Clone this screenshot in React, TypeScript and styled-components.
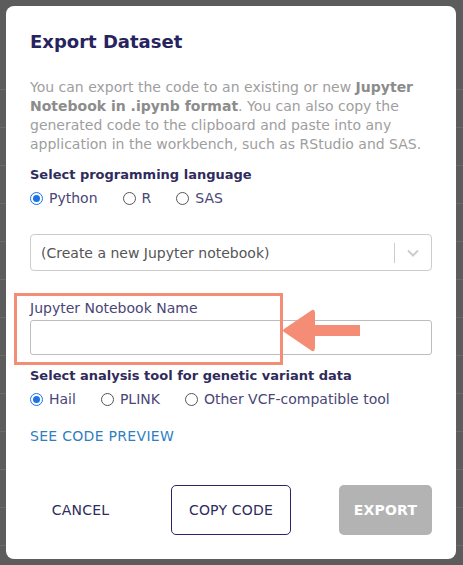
import React from 'react';
import styled, { createGlobalStyle } from 'styled-components';

const GlobalStyle = createGlobalStyle`
  html, body {
    margin: 0;
    padding: 0;
    background: #5c5c5c;
    font-family: "DejaVu Sans", "Open Sans", sans-serif;
  }
  * { box-sizing: border-box; }
`;

const Page = styled.div`
  position: relative;
  width: 463px;
  height: 565px;
  overflow: hidden;
  background: #5c5c5c;
`;

const Backdrop = styled.div`
  display: flex;
  flex-direction: column;
  padding-top: 52px;
`;

const BackRow = styled.div`
  height: 38px;
  border-bottom: 1px solid #6a6a6a;
`;

const Overlay = styled.div`
  position: absolute;
  inset: 0;
  padding: 6px 7px 6px 6px;
`;

const Modal = styled.div`
  position: relative;
  height: 553px;
  background: #fff;
  border-radius: 8px;
  padding: 24px;
  display: flex;
  flex-direction: column;
`;

const Title = styled.h2`
  margin: 0;
  font-size: 18px;
  font-weight: 600;
  color: #27235e;
  line-height: 24px;
`;

const Description = styled.p`
  margin: 24px 0 0;
  font-size: 14px;
  line-height: 19px;
  color: #9e9e9e;

  b { color: #8c8c8c; font-weight: 700; }
`;

const SectionLabel = styled.div`
  margin-top: 12px;
  font-size: 13px;
  font-weight: 700;
  color: #2f2b5c;
  line-height: 18px;
`;

const RadioRow = styled.div`
  display: flex;
  gap: 25px;
  margin-top: 5px;
  height: 18px;
  align-items: center;
`;

const RadioOption = styled.label`
  display: flex;
  align-items: center;
  gap: 6px;
  font-size: 14px;
  color: #4a4676;
`;

const RadioCircle = styled.span<{ $checked?: boolean }>`
  width: 13px;
  height: 13px;
  border-radius: 50%;
  border: 1px solid ${p => (p.$checked ? '#1a73e8' : '#555')};
  display: flex;
  align-items: center;
  justify-content: center;

  &::after {
    content: '';
    width: 7px;
    height: 7px;
    border-radius: 50%;
    background: ${p => (p.$checked ? '#1a73e8' : 'transparent')};
  }
`;

const SelectBox = styled.div`
  margin-top: 27px;
  height: 37px;
  border: 1px solid #cccccc;
  border-radius: 4px;
  display: flex;
  align-items: center;
`;

const SelectValue = styled.div`
  flex: 1;
  padding-left: 10px;
  font-size: 14px;
  color: #555;
`;

const SelectDivider = styled.span`
  width: 1px;
  height: 20px;
  background: #cccccc;
`;

const SelectArrow = styled.div`
  width: 36px;
  display: flex;
  justify-content: center;
  color: #cccccc;
`;

const FieldLabel = styled.div`
  margin-top: 29px;
  font-size: 14px;
  color: #4a4676;
  line-height: 16px;
`;

const TextInput = styled.input`
  margin-top: 4px;
  height: 35px;
  width: 100%;
  border: 1px solid #bdbdbd;
  border-radius: 3px;
  font-family: inherit;
  font-size: 14px;
  outline: none;
`;

const LinkButton = styled.a`
  margin-top: 19px;
  font-size: 14px;
  letter-spacing: 0.3px;
  color: #2f7fc0;
  text-transform: uppercase;
  line-height: 18px;
`;

const Footer = styled.div`
  margin-top: auto;
  display: flex;
  align-items: center;
  justify-content: space-between;
`;

const Button = styled.button<{ $variant: 'text' | 'outline' | 'disabled' }>`
  height: 50px;
  font-family: inherit;
  font-size: 14px;
  letter-spacing: 0.2px;
  text-transform: uppercase;
  border-radius: 5px;
  cursor: pointer;
  background: ${p => (p.$variant === 'disabled' ? '#b3b3b3' : '#fff')};
  color: ${p => (p.$variant === 'disabled' ? '#fff' : '#2f2b5c')};
  font-weight: ${p => (p.$variant === 'disabled' ? 700 : 400)};
  border: ${p => (p.$variant === 'outline' ? '1px solid #2a2566' : 'none')};
  width: ${p => (p.$variant === 'outline' ? '120px' : '93px')};
  padding: 0 0 0 ${p => (p.$variant === 'text' ? '8px' : '0')};
`;

const Highlight = styled.div`
  position: absolute;
  left: 8px;
  top: 287px;
  width: 269px;
  height: 72px;
  border: 3px solid #f58d76;
  pointer-events: none;
`;

const Arrow = styled.svg`
  position: absolute;
  left: 275px;
  top: 303px;
`;

const Radio = ({ label, checked }: { label: string; checked?: boolean }) => (
  <RadioOption>
    <RadioCircle $checked={checked} />
    {label}
  </RadioOption>
);

export default function App() {
  return (
    <Page>
      <GlobalStyle />
      <Backdrop>
        {Array.from({ length: 13 }).map((_, i) => (
          <BackRow key={i} />
        ))}
      </Backdrop>
      <Overlay>
        <Modal>
          <Title>Export Dataset</Title>
          <Description>
            You can export the code to an existing or new <b>Jupyter Notebook in .ipynb format</b>. You can
            also copy the generated code to the clipboard and paste into any application in the workbench,
            such as RStudio and SAS.
          </Description>
          <SectionLabel>Select programming language</SectionLabel>
          <RadioRow>
            <Radio label="Python" checked />
            <Radio label="R" />
            <Radio label="SAS" />
          </RadioRow>
          <SelectBox>
            <SelectValue>(Create a new Jupyter notebook)</SelectValue>
            <SelectDivider />
            <SelectArrow>
              <svg width="14" height="10" viewBox="0 0 14 10">
                <path d="M2 2.5 L7 7.5 L12 2.5" fill="none" stroke="currentColor" strokeWidth="2" />
              </svg>
            </SelectArrow>
          </SelectBox>
          <FieldLabel>Jupyter Notebook Name</FieldLabel>
          <TextInput />
          <SectionLabel>Select analysis tool for genetic variant data</SectionLabel>
          <RadioRow>
            <Radio label="Hail" checked />
            <Radio label="PLINK" />
            <Radio label="Other VCF-compatible tool" />
          </RadioRow>
          <LinkButton>See code preview</LinkButton>
          <Footer>
            <Button $variant="text">Cancel</Button>
            <Button $variant="outline">Copy code</Button>
            <Button $variant="disabled">Export</Button>
          </Footer>
          <Highlight />
          <Arrow width="90" height="50" viewBox="0 0 90 50">
            <path
              d="M31 1 Q34 0 34 5 L34 16 L79 16 L79 27 L34 27 L34 38 Q34 43 31 42 L3 23 Q1 21.5 3 20 Z"
              fill="#f58d76"
            />
          </Arrow>
        </Modal>
      </Overlay>
    </Page>
  );
}
